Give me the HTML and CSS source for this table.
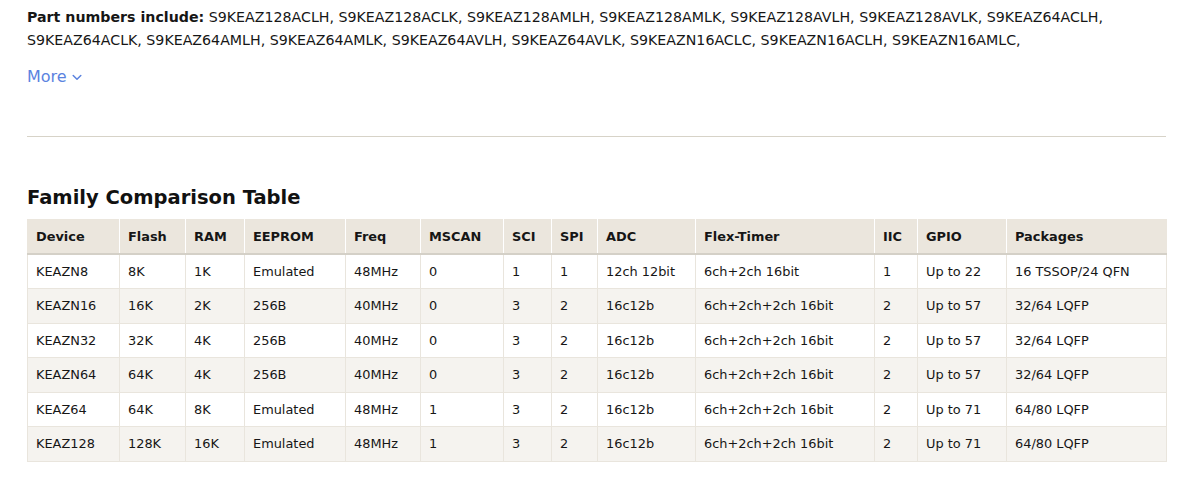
FILE: index.html
```html
<!DOCTYPE html>
<html lang="en">
<head>
<meta charset="utf-8">
<link rel="stylesheet" href="styles.css">
</head>
<body>
<div class="page">
  <p class="parts"><strong>Part numbers include:</strong> S9KEAZ128ACLH, S9KEAZ128ACLK, S9KEAZ128AMLH, S9KEAZ128AMLK, S9KEAZ128AVLH, S9KEAZ128AVLK, S9KEAZ64ACLH, S9KEAZ64ACLK, S9KEAZ64AMLH, S9KEAZ64AMLK, S9KEAZ64AVLH, S9KEAZ64AVLK, S9KEAZN16ACLC, S9KEAZN16ACLH, S9KEAZN16AMLC,</p>
  <a class="more" href="#">More <svg class="chev" width="10" height="7" viewBox="0 0 10 7"><path d="M1.2 1.5 L5 5.2 L8.8 1.5" fill="none" stroke="currentColor" stroke-width="1.5" stroke-linecap="round" stroke-linejoin="round"/></svg></a>
  <hr class="rule">
  <h2 class="title">Family Comparison Table</h2>
  <table class="cmp">
    <colgroup>
      <col style="width:92px"><col style="width:66px"><col style="width:59px"><col style="width:101px"><col style="width:75px"><col style="width:83px"><col style="width:48px"><col style="width:46px"><col style="width:98px"><col style="width:179px"><col style="width:43px"><col style="width:89px"><col style="width:160px">
    </colgroup>
    <thead>
      <tr><th>Device</th><th>Flash</th><th>RAM</th><th>EEPROM</th><th>Freq</th><th>MSCAN</th><th>SCI</th><th>SPI</th><th>ADC</th><th>Flex-Timer</th><th>IIC</th><th>GPIO</th><th>Packages</th></tr>
    </thead>
    <tbody>
      <tr><td>KEAZN8</td><td>8K</td><td>1K</td><td>Emulated</td><td>48MHz</td><td>0</td><td>1</td><td>1</td><td>12ch 12bit</td><td>6ch+2ch 16bit</td><td>1</td><td>Up to 22</td><td>16 TSSOP/24 QFN</td></tr>
      <tr><td>KEAZN16</td><td>16K</td><td>2K</td><td>256B</td><td>40MHz</td><td>0</td><td>3</td><td>2</td><td>16c12b</td><td>6ch+2ch+2ch 16bit</td><td>2</td><td>Up to 57</td><td>32/64 LQFP</td></tr>
      <tr><td>KEAZN32</td><td>32K</td><td>4K</td><td>256B</td><td>40MHz</td><td>0</td><td>3</td><td>2</td><td>16c12b</td><td>6ch+2ch+2ch 16bit</td><td>2</td><td>Up to 57</td><td>32/64 LQFP</td></tr>
      <tr><td>KEAZN64</td><td>64K</td><td>4K</td><td>256B</td><td>40MHz</td><td>0</td><td>3</td><td>2</td><td>16c12b</td><td>6ch+2ch+2ch 16bit</td><td>2</td><td>Up to 57</td><td>32/64 LQFP</td></tr>
      <tr><td>KEAZ64</td><td>64K</td><td>8K</td><td>Emulated</td><td>48MHz</td><td>1</td><td>3</td><td>2</td><td>16c12b</td><td>6ch+2ch+2ch 16bit</td><td>2</td><td>Up to 71</td><td>64/80 LQFP</td></tr>
      <tr><td>KEAZ128</td><td>128K</td><td>16K</td><td>Emulated</td><td>48MHz</td><td>1</td><td>3</td><td>2</td><td>16c12b</td><td>6ch+2ch+2ch 16bit</td><td>2</td><td>Up to 71</td><td>64/80 LQFP</td></tr>
    </tbody>
  </table>
</div>
</body>
</html>
```

FILE: styles.css
```css
* { box-sizing: border-box; }
html, body { margin: 0; padding: 0; background: #fff; }
body {
  font-family: "DejaVu Sans", "Noto Sans", sans-serif;
  color: #161616;
}
.page {
  width: 1139px;
  margin-left: 27px;
  padding-top: 6px;
}
.parts {
  margin: 0;
  font-size: 14.2px;
  line-height: 23px;
}
.parts strong { font-weight: 700; }
.more {
  display: inline-flex;
  align-items: center;
  gap: 5px;
  margin-top: 13px;
  font-size: 16px;
  line-height: 23px;
  color: #5b83df;
  text-decoration: none;
}
.chev { margin-top: 1px; }
.rule {
  margin: 48px 0 0 0;
  border: 0;
  border-top: 1px solid #d7d3c8;
  height: 0;
}
.title {
  margin: 49px 0 9px 0;
  font-size: 19.5px;
  font-weight: 700;
  line-height: 24px;
  color: #111;
}
.cmp {
  width: 1139px;
  border-collapse: collapse;
  table-layout: fixed;
  font-size: 12.9px;
}
.cmp th, .cmp td {
  border: 1px solid #e9e5dd;
  padding: 0 0 0 8px;
  text-align: left;
  white-space: nowrap;
  overflow: hidden;
}
.cmp th {
  background: #ebe6dd;
  height: 35px;
  font-weight: 700;
  border-bottom: 2px solid #d4d0c7;
  border-top: 0;
  border-left-color: #fff;
  border-right-color: #fff;
}
.cmp th:first-child { border-left-color: #ebe6dd; }
.cmp th:last-child { border-right-color: #ebe6dd; }
.cmp td {
  height: 34.5px;
  font-weight: 400;
}
.cmp tbody tr:nth-child(even) td { background: #f5f3ef; }
```
